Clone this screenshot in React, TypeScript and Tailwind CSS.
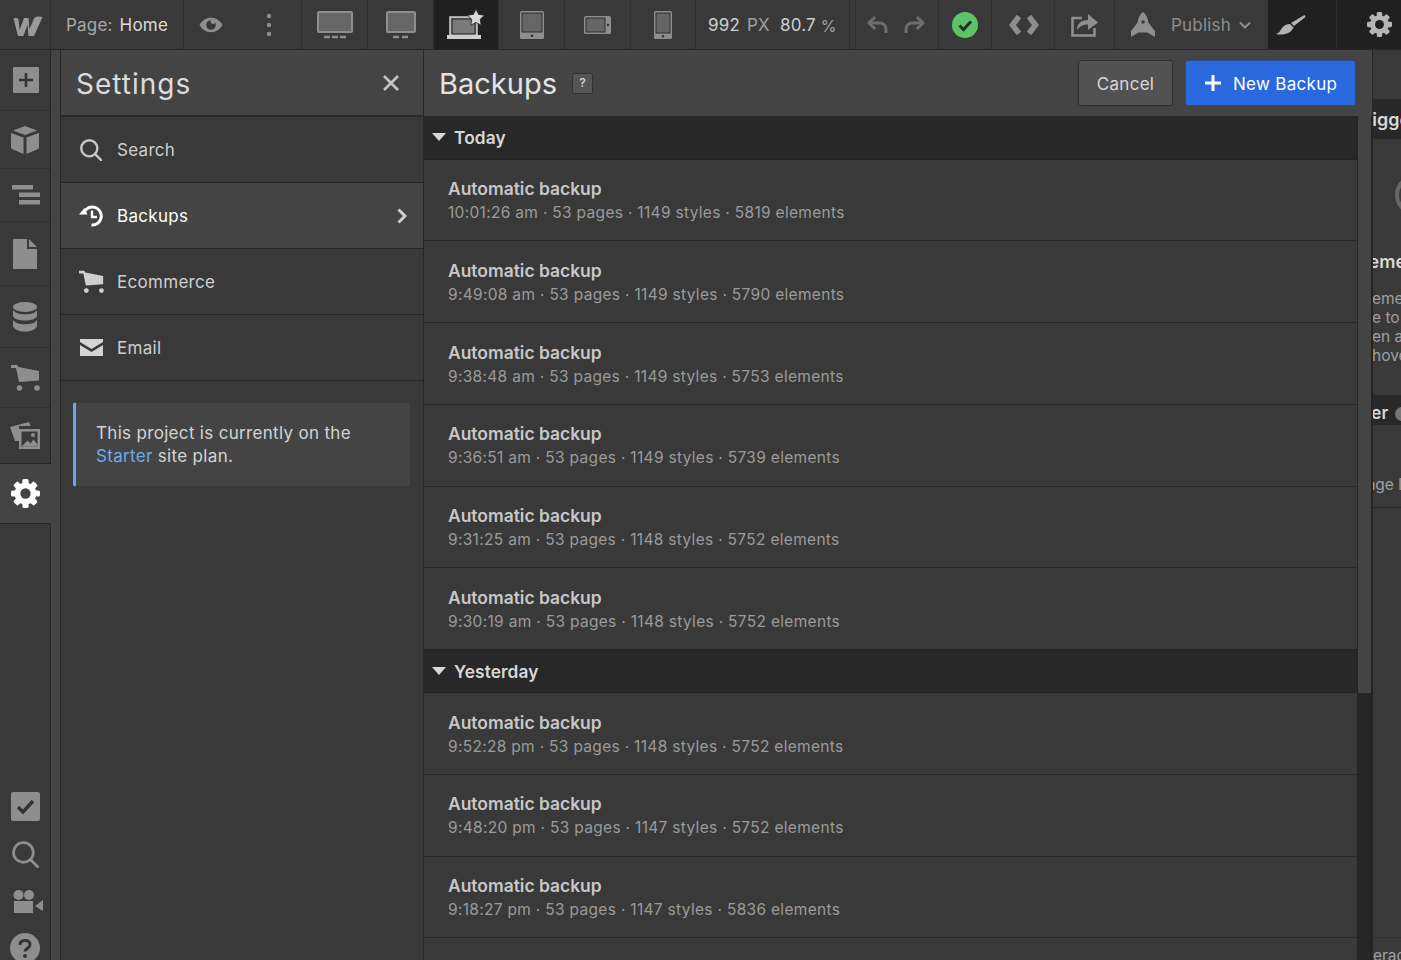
import React from 'react';

const font = { fontFamily: 'Inter, sans-serif' };

const today = [
  ['10:01:26 am', '53 pages', '1149 styles', '5819 elements'],
  ['9:49:08 am', '53 pages', '1149 styles', '5790 elements'],
  ['9:38:48 am', '53 pages', '1149 styles', '5753 elements'],
  ['9:36:51 am', '53 pages', '1149 styles', '5739 elements'],
  ['9:31:25 am', '53 pages', '1148 styles', '5752 elements'],
  ['9:30:19 am', '53 pages', '1148 styles', '5752 elements'],
];
const yesterday = [
  ['9:52:28 pm', '53 pages', '1148 styles', '5752 elements'],
  ['9:48:20 pm', '53 pages', '1147 styles', '5752 elements'],
  ['9:18:27 pm', '53 pages', '1147 styles', '5836 elements'],
];

const Seg = ({ w, dark, children }: { w: string; dark?: boolean; children?: React.ReactNode }) => (
  <div className={`${w} ${dark ? 'bg-[#202020]' : ''} shrink-0 h-full flex items-center justify-center border-r border-[#2f2f2f]`}>
    {children}
  </div>
);

function TopBar() {
  return (
    <div className="h-[50px] shrink-0 flex bg-[#393939] border-b border-[#262626] text-[17px] tracking-[0.2px]">
      <Seg w="w-[51px]">
        <svg className="ml-[6px] mt-[2px]" width="30" height="22" viewBox="0 0 30 22"><path d="M0.5 3.5c2.5-1 5-.6 5.2 2L6.6 15 11 3h4.600l.8 11.500L21 3.500c1-2.200 6-2.500 8.500-1.400L21 21h-5.600L14.600 9.500 10.400 21H5L.5 3.500z" fill="#9a9a9a" /></svg>
      </Seg>
      <Seg w="w-[133px]">
        <span className="text-[#a8a8a8] pt-[2px]">Page:</span>
        <span className="text-[#dcdcdc] ml-[7px] pt-[2px]">Home</span>
      </Seg>
      <div className="w-[118px] shrink-0 h-full flex items-center border-r border-[#2f2f2f]">
        <svg className="ml-[15px]" width="24" height="16" viewBox="0 0 24 16"><path fillRule="evenodd" d="M0.5 8C3 3.500 7 .8 12 .8S21 3.500 23.500 8C21 12.500 17 15.200 12 15.200S3 12.500.5 8zM12 3.200a4.800 4.800 0 1 0 4.800 4.800c0-.8-.2-1.500-.5-2.200-.4.7-1.100 1.100-2 1.100a2.400 2.400 0 0 1-2.300-3.700z" fill="#8e8e8e" /></svg>
        <svg className="ml-[43px]" width="6" height="24" viewBox="0 0 6 24"><circle cx="3" cy="3" r="2.200" fill="#8e8e8e" /><circle cx="3" cy="12" r="2.200" fill="#8e8e8e" /><circle cx="3" cy="21" r="2.200" fill="#8e8e8e" /></svg>
      </div>
      <Seg w="w-[66px]">
        <svg width="36" height="28" viewBox="0 0 36 28">
          <rect x="1" y="1" width="34" height="20" rx="1" fill="#666" stroke="#8e8e8e" strokeWidth="2" />
          <path d="M7 26h6M15 26h6M23 26h6" stroke="#8e8e8e" strokeWidth="2.400" />
        </svg>
      </Seg>
      <Seg w="w-[66px]">
        <svg width="30" height="28" viewBox="0 0 30 28">
          <rect x="1" y="1" width="28" height="20" rx="1" fill="#666" stroke="#8e8e8e" strokeWidth="2" />
          <path d="M7 26h6M16 26h6" stroke="#8e8e8e" strokeWidth="2.400" />
        </svg>
      </Seg>
      <Seg w="w-[65px]" dark>
        <svg width="38" height="32" viewBox="0 0 38 32">
          <rect x="3" y="8" width="27" height="18" fill="#7a7a7a" stroke="#cfcfcf" strokeWidth="1.500" />
          <rect x="5" y="10" width="23" height="15" fill="#7a7a7a" stroke="#222" strokeWidth="1" />
          <rect x="0" y="26" width="34" height="4" fill="#cfcfcf" />
          <path d="M29 0l2.600 5.400 5.900.8-4.300 4.100 1 5.900-5.200-2.800-5.200 2.800 1-5.900-4.300-4.100 5.900-.8z" fill="#d8d8d8" stroke="#202020" strokeWidth="0.800" />
        </svg>
      </Seg>
      <Seg w="w-[66px]">
        <svg width="24" height="28" viewBox="0 0 24 28">
          <rect x="0" y="0" width="24" height="28" rx="1.500" fill="#8e8e8e" />
          <rect x="1.500" y="1.500" width="21" height="20" fill="#2f2f2f" />
          <rect x="2.500" y="2.500" width="19" height="18" fill="#666" />
          <circle cx="12" cy="24.800" r="1.300" fill="#2f2f2f" />
        </svg>
      </Seg>
      <Seg w="w-[66px]">
        <svg width="27" height="18" viewBox="0 0 27 18">
          <rect x="0" y="0" width="27" height="18" rx="1.500" fill="#8e8e8e" />
          <rect x="1.500" y="1.500" width="20" height="15" fill="#2f2f2f" />
          <rect x="2.500" y="2.500" width="18" height="13" fill="#666" />
          <circle cx="24" cy="9" r="1.200" fill="#2f2f2f" />
        </svg>
      </Seg>
      <Seg w="w-[65px]">
        <svg width="18" height="28" viewBox="0 0 18 28">
          <rect x="0" y="0" width="18" height="28" rx="1.500" fill="#8e8e8e" />
          <rect x="1.500" y="1.500" width="15" height="21" fill="#2f2f2f" />
          <rect x="2.500" y="2.500" width="13" height="19" fill="#666" />
          <circle cx="9" cy="25.200" r="1.200" fill="#2f2f2f" />
        </svg>
      </Seg>
      <div className="w-[154px] shrink-0 h-full flex items-center pl-[12px] pt-[2px] border-r border-[#2f2f2f]">
        <span className="text-[#d0d0d0]">992</span>
        <span className="text-[#a0a0a0] ml-[7px]">PX</span>
        <span className="text-[#d0d0d0] ml-[10px]">80.7</span>
        <span className="text-[#a0a0a0] ml-[5px] text-[16px]">%</span>
      </div>
      <div className="w-[6px] shrink-0 h-full border-r border-[#2f2f2f]" />
      <div className="w-[83px] shrink-0 h-full flex items-center pl-[11px] gap-[14px] border-r border-[#2f2f2f]">
        <svg width="22" height="20" viewBox="0 0 22 20" fill="none" stroke="#6e6e6e" strokeWidth="3"><path d="M2 8h11a6 6 0 0 1 6 6v4" /><path d="M8 2L2 8l6 6" /></svg>
        <svg width="22" height="20" viewBox="0 0 22 20" fill="none" stroke="#6e6e6e" strokeWidth="3"><path d="M20 8H9a6 6 0 0 0-6 6v4" /><path d="M14 2l6 6-6 6" /></svg>
      </div>
      <Seg w="w-[53px]">
        <svg width="26" height="26" viewBox="0 0 26 26"><circle cx="13" cy="13" r="13" fill="#5cc466" /><path d="M7.500 13.500l4 4 7.500-8" fill="none" stroke="#2b2b2b" strokeWidth="3" /></svg>
      </Seg>
      <Seg w="w-[63px]">
        <svg className="ml-[2px]" width="30" height="20" viewBox="0 0 30 20" fill="none" stroke="#8e8e8e" strokeWidth="5.500"><path d="M10 1.500L3.500 10l6.500 8.500" /><path d="M20 1.500L26.500 10 20 18.500" /></svg>
      </Seg>
      <Seg w="w-[60px]">
        <svg width="28" height="24" viewBox="0 0 28 24" fill="none"><path d="M11 5H1.500v17.500h22V15" stroke="#8e8e8e" strokeWidth="2.600" /><path d="M6 17c0-6 4-10 11-10V1l10 8.500L17 17v-5.500c-5 0-8 1.500-11 5.500z" fill="#8e8e8e" /></svg>
      </Seg>
      <div className="w-[153px] shrink-0 h-full flex items-center pl-[16px] text-[#8e8e8e]">
        <svg width="24" height="25" viewBox="0 0 24 25"><path d="M12 0c3.200 2.500 5 6 5.300 10.500L24 19v6l-7.500-4.500h-9L0 25v-6l6.700-8.500C7 6 8.800 2.500 12 0z" fill="#8e8e8e" /><circle cx="12" cy="10" r="1.800" fill="#393939" /></svg>
        <span className="ml-[16px] pt-[2px]">Publish</span>
        <svg className="ml-[8px]" width="12" height="8" viewBox="0 0 12 8" fill="none" stroke="#8e8e8e" strokeWidth="2"><path d="M1 1.500l5 5 5-5" /></svg>
      </div>
      <Seg w="w-[69px]" dark>
        <svg className="-ml-[22px]" width="30" height="22" viewBox="0 0 30 22"><path d="M28.500 1L15 9l3 3L29.500 3z" fill="#b5b5b5" /><path d="M14 10l3.500 3.500C15 19 8 22 0 20c3.500-1 4-3 6-6 2-2.500 5-4 8-4z" fill="#b5b5b5" /></svg>
      </Seg>
      <div className="flex-1 h-full bg-[#202020] flex items-center justify-center">
        <Gear size={25} color="#b5b5b5" hole="#202020" className="ml-[20px]" />
      </div>
    </div>
  );
}

const Gear = ({ size, color, hole, className = '' }: { size: number; color: string; hole: string; className?: string }) => (
  <svg width={size} height={size} viewBox="0 0 28 28" className={className}>
    <g fill={color}>
      {[0, 45, 90, 135, 180, 225, 270, 315].map((r) => (
        <rect key={r} x="11" y="0" width="6" height="7" rx="1.500" transform={`rotate(${r} 14 14)`} />
      ))}
      <circle cx="14" cy="14" r="10.500" />
    </g>
    <circle cx="14" cy="14" r="5" fill={hole} />
  </svg>
);

const Search = ({ color = '#8e8e8e', size = 26, sw = 2.2 }: { color?: string; size?: number; sw?: number }) => (
  <svg width={size} height={size} viewBox="0 0 26 26" fill="none" stroke={color} strokeWidth={sw}>
    <circle cx="11" cy="11" r="9.500" />
    <path d="M17.500 17.500L25 25" strokeLinecap="round" />
  </svg>
);

const Cart = ({ color = '#8e8e8e', w = 29, h = 26 }: { color?: string; w?: number; h?: number }) => (
  <svg width={w} height={h} viewBox="0 0 29 26">
    <path d="M0 0h6l1.500 2 20.500 4v9.500L8 17 5 3H0z" fill={color} />
    <circle cx="8.500" cy="23" r="2.800" fill={color} />
    <circle cx="26" cy="23" r="2.800" fill={color} />
  </svg>
);

const SideCell = ({ h, children }: { h: string; children: React.ReactNode }) => (
  <div className={`${h} shrink-0 flex items-center justify-center border-b border-[#2f2f2f]`}>{children}</div>
);

function Sidebar() {
  return (
    <div className="w-[51px] shrink-0 flex flex-col h-full">
      <div className="h-[414px] shrink-0 flex flex-col bg-[#393939] border-r border-b border-[#262626]">
        <SideCell h="h-[61px]">
          <svg className="ml-[2px]" width="26" height="26" viewBox="0 0 26 26"><rect width="26" height="26" rx="1" fill="#8e8e8e" /><path d="M13 6v14M6 13h14" stroke="#333" strokeWidth="2.600" /></svg>
        </SideCell>
        <SideCell h="h-[58px]">
          <svg width="28" height="28" viewBox="0 0 28 28" fill="#8e8e8e"><path d="M14 0l12 4.500L14 9 2 4.500z" /><path d="M0 7l12.500 4.500V28L2 23.500 0 22z" /><path d="M28 7l-12.500 4.500V28L26 23.500 28 22z" /></svg>
        </SideCell>
        <SideCell h="h-[53px]">
          <svg className="ml-[2px]" width="28" height="20" viewBox="0 0 28 20" fill="#8e8e8e"><rect x="0" y="0" width="21" height="4.500" /><rect x="7" y="7.500" width="21" height="4.500" /><rect x="7" y="15" width="21" height="4.500" /></svg>
        </SideCell>
        <SideCell h="h-[64px]">
          <svg width="24" height="30" viewBox="0 0 24 30" fill="#8e8e8e"><path d="M0 0h14v10h10v20H0z" /><path d="M16 0l8 8h-8z" /></svg>
        </SideCell>
        <SideCell h="h-[62px]">
          <svg width="24" height="30" viewBox="0 0 24 30" fill="#8e8e8e"><ellipse cx="12" cy="5" rx="12" ry="5" /><path d="M0 8c2 3 6 4.200 12 4.200S22 11 24 8v6c-1 3-6 4.500-12 4.500S1 17 0 14z" /><path d="M0 18c2 3 6 4.200 12 4.200S22 21 24 18v6c-1 3.500-6 5.500-12 5.500S1 27.500 0 24z" /></svg>
        </SideCell>
        <SideCell h="h-[60px]"><Cart /></SideCell>
        <div className="flex-1 flex items-center justify-center">
          <svg width="30" height="27" viewBox="0 0 30 27">
            <path d="M0 5L19 0l1.500 4H9v15H5z" fill="#8e8e8e" />
            <path d="M9 7h21v20H9z" fill="#8e8e8e" />
            <path d="M11.500 9.500h16v15h-16z" fill="#393939" />
            <path d="M11.500 24.500l6-6 3 3 3-4 4 5v2z" fill="#8e8e8e" />
            <circle cx="23" cy="13" r="2" fill="#8e8e8e" />
          </svg>
        </div>
      </div>
      <div className="h-[59px] shrink-0 bg-[#444] flex items-center justify-center">
        <Gear size={29} color="#fff" hole="#444" />
      </div>
      <div className="flex-1 min-h-0 bg-[#393939] border-r border-t border-[#262626] flex flex-col items-center justify-end -mb-[3px]">
        <svg width="29" height="29" viewBox="0 0 29 29"><rect width="29" height="29" rx="2" fill="#8e8e8e" /><path d="M7 15l5 5 10-11" fill="none" stroke="#333" strokeWidth="3.400" /></svg>
        <div className="mt-[20px]"><Search color="#8e8e8e" size={27} sw={2.6} /></div>
        <svg className="mt-[22px] ml-[6px]" width="30" height="23" viewBox="0 0 30 23" fill="#8e8e8e"><circle cx="5.500" cy="5" r="5" /><circle cx="16" cy="5" r="5" /><rect x="1" y="11" width="19" height="12" /><path d="M22 16l8-6v11z" /></svg>
        <svg className="mt-[20px]" width="30" height="30" viewBox="0 0 30 30"><circle cx="15" cy="15" r="15" fill="#8e8e8e" /><path d="M10 12c0-3 2-4.500 5-4.500s5 1.500 5 4.200c0 3.800-5 3.500-5 6.800" fill="none" stroke="#333" strokeWidth="3" /><circle cx="15" cy="23" r="2" fill="#333" /></svg>
      </div>
    </div>
  );
}

const Nav = ({ icon, label, active }: { icon: React.ReactNode; label: string; active?: boolean }) => (
  <div className={`h-[66px] shrink-0 flex items-center border-b border-[#262626] ${active ? 'bg-[#444] text-white' : 'text-[#cfcfcf]'}`}>
    <div className="w-[56px] shrink-0 flex items-center justify-center pl-[4px]">{icon}</div>
    <span className="text-[17px] tracking-[0.3px] pt-[2px]">{label}</span>
    {active && (
      <svg className="ml-auto mr-[16px]" width="10" height="16" viewBox="0 0 10 16" fill="none" stroke="#cfcfcf" strokeWidth="3"><path d="M1.500 1.500L8 8l-6.500 6.500" /></svg>
    )}
  </div>
);

function SettingsPanel() {
  return (
    <div className="w-[363px] shrink-0 bg-[#393939] border-r border-[#262626] flex flex-col h-full">
      <div className="h-[67px] shrink-0 bg-[#444] border-b-2 border-[#2b2b2b] flex items-center justify-between pl-[15px] pr-[23px]">
        <span className="text-[28px] text-[#dcdcdc] tracking-[1px] pt-[2px]">Settings</span>
        <svg width="18" height="18" viewBox="0 0 18 18" stroke="#c4c4c4" strokeWidth="2.600"><path d="M2 2l14 14M16 2L2 16" /></svg>
      </div>
      <Nav icon={<Search color="#c8c8c8" size={22} sw={2.8} />} label="Search" />
      <Nav active label="Backups" icon={
        <svg width="24" height="22" viewBox="0 0 24 22" fill="none" stroke="#fff" strokeWidth="3">
          <path d="M5 7.500A9 9 0 1 1 12.500 20" />
          <path d="M0 9.500l5.500-6.500 3 6.500z" fill="#fff" stroke="none" />
          <path d="M13 5.500V12h5" strokeWidth="2.400" />
        </svg>
      } />
      <Nav label="Ecommerce" icon={<Cart color="#cfcfcf" w={25} h={24} />} />
      <Nav label="Email" icon={
        <svg width="23" height="17" viewBox="0 0 23 17" fill="#d4d4d4"><path d="M0 0h23v3l-11.500 7L0 3z" /><path d="M0 6l11.500 7L23 6v11H0z" /></svg>
      } />
      <div className="mx-[12px] mt-[21px] h-[85px] rounded-[3px] bg-[#444] border border-[#3a3a3a] border-l-[3px] border-l-[#6fa5ec] pl-[20px] pt-[19px] text-[17px] leading-[23px] tracking-[0.32px] text-[#d4d4d4]">
        <div>This project is currently on the</div>
        <div><span className="text-[#72a9f0]">Starter</span> site plan.</div>
      </div>
    </div>
  );
}

const GroupHeader = ({ label, h }: { label: string; h: string }) => (
  <div className={`${h} shrink-0 bg-[#282828] border-b border-[#222] flex items-center pl-[8px]`}>
    <svg width="14" height="8" viewBox="0 0 14 8"><path d="M0 0h14L7 8z" fill="#d8d8d8" /></svg>
    <span className="ml-[8px] pt-[2px] text-[17.3px] font-semibold text-[#d8d8d8] tracking-[0.1px]">{label}</span>
  </div>
);

const BackupRow = ({ meta }: { meta: string[] }) => (
  <div className="h-[81.75px] shrink-0 border-b border-[#262626] pl-[24px] pt-[16.5px]">
    <div className="text-[17.45px] leading-[25px] font-semibold text-[#c8c8c8]">Automatic backup</div>
    <div className="text-[15.5px] leading-[24px] tracking-[0.31px] text-[#9b9b9b]">{meta.join(' · ')}</div>
  </div>
);

function BackupsPanel() {
  return (
    <div className="w-[948px] shrink-0 flex flex-col h-full">
      <div className="h-[66px] shrink-0 bg-[#444] flex items-center pl-[15px] pr-[16px]">
        <span className="text-[29px] text-[#e4e4e4] pt-[2px]">Backups</span>
        <span className="ml-[15px] w-[21px] h-[21px] rounded-[2px] bg-[#555] border border-[#333] flex items-center justify-center text-[12px] font-semibold text-[#d4d4d4]">?</span>
        <button className="ml-auto w-[95px] h-[46px] rounded-[3px] bg-[#525252] border border-[#2f2f2f] pt-[3px] text-[17px] tracking-[0.3px] text-[#d8d8d8]">Cancel</button>
        <button className="ml-[12px] w-[171px] h-[46px] rounded-[3px] bg-[#2a68de] border border-[#2b4a80] text-[17px] tracking-[0.3px] text-white flex items-center pl-[19px]">
          <svg width="16" height="16" viewBox="0 0 16 16" stroke="#fff" strokeWidth="3"><path d="M8 0v16M0 8h16" /></svg>
          <span className="ml-[12px] pt-[3px]">New Backup</span>
        </button>
      </div>
      <div className="flex-1 min-h-0 flex">
        <div className="flex-1 min-w-0 bg-[#393939] flex flex-col overflow-hidden">
          <GroupHeader label="Today" h="h-[43.5px]" />
          {today.map((m) => <BackupRow key={m[0]} meta={m} />)}
          <GroupHeader label="Yesterday" h="h-[43px]" />
          {yesterday.map((m) => <BackupRow key={m[0]} meta={m} />)}
        </div>
        <div className="w-[15px] shrink-0 bg-[#262626] border-x border-[#222]">
          <div className="h-[577px] bg-[#444]" />
        </div>
      </div>
    </div>
  );
}

// cut off by the edge of the window, only the slivers of this panel show
function RightPanel() {
  return (
    <div className="flex-1 min-w-0 h-full bg-[#393939] border-l border-[#262626] flex flex-col overflow-hidden text-[#a0a0a0] whitespace-nowrap">
      <div className="h-[49px] shrink-0" />
      <div className="h-[40px] shrink-0 bg-[#282828] flex items-center text-[18px] font-semibold text-[#d8d8d8]">
        <span className="-ml-[19px]">Trigger</span>
      </div>
      <div className="h-[256px] shrink-0 relative">
        <div className="absolute left-[22px] top-[36px] w-[40px] h-[40px] rounded-full border-[4px] border-[#666]" />
        <div className="absolute -left-[20px] top-[109px] text-[18px] font-semibold text-[#d8d8d8]">Element</div>
        <div className="absolute -left-[1px] top-[150px] text-[15.5px] leading-[19px]">
          <div>ement</div>
          <div>e to</div>
          <div>en a</div>
          <div>hover</div>
        </div>
      </div>
      <div className="h-[30px] shrink-0 bg-[#282828] flex items-center pt-[8px] text-[17px] font-semibold text-[#d8d8d8]">
        <span className="-ml-[34px]">Hover</span>
        <span className="ml-[7px] w-[14px] h-[14px] rounded-full bg-[#777] shrink-0" />
      </div>
      <div className="h-[83px] shrink-0 border-b border-[#262626] flex items-end pb-[11px] text-[15.5px]">
        <span className="-ml-[16px]">page load</span>
      </div>
      <div className="h-[430px] shrink-0 border-b border-[#2f2f2f]" />
      <div className="text-[15.5px] leading-[24px] pt-[6px]">erac</div>
    </div>
  );
}

export default function App() {
  return (
    <div style={font} className="w-[1401px] h-[960px] overflow-hidden flex flex-col bg-[#393939]">
      <TopBar />
      <div className="flex-1 min-h-0 flex">
        <Sidebar />
        <div className="w-[10px] shrink-0 h-full bg-[#444] border-r border-[#262626]" />
        <SettingsPanel />
        <BackupsPanel />
        <RightPanel />
      </div>
    </div>
  );
}
